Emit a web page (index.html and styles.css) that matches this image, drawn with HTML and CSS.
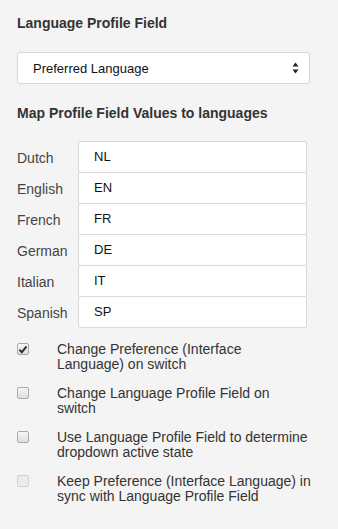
FILE: index.html
```html
<!DOCTYPE html>
<html>
<head>
<meta charset="utf-8">
<link rel="stylesheet" href="styles.css">
</head>
<body>
<div class="panel">
  <h2 class="heading">Language Profile Field</h2>
  <div class="select">
    <span class="select-text">Preferred Language</span>
    <svg class="select-arrows" width="7" height="14" viewBox="0 0 7 14">
      <path d="M0.5 5.5 L3.5 1.5 L6.5 5.5 Z" fill="#222"/>
      <path d="M0.5 8.5 L3.5 12.5 L6.5 8.5 Z" fill="#222"/>
    </svg>
  </div>
  <h2 class="heading heading-map">Map Profile Field Values to languages</h2>
  <div class="map">
    <div class="map-row"><span class="map-label">Dutch</span><div class="map-input">NL</div></div>
    <div class="map-row"><span class="map-label">English</span><div class="map-input">EN</div></div>
    <div class="map-row"><span class="map-label">French</span><div class="map-input">FR</div></div>
    <div class="map-row"><span class="map-label">German</span><div class="map-input">DE</div></div>
    <div class="map-row"><span class="map-label">Italian</span><div class="map-input">IT</div></div>
    <div class="map-row"><span class="map-label">Spanish</span><div class="map-input">SP</div></div>
  </div>
  <div class="options">
    <div class="option">
      <span class="check checked">
        <svg width="10" height="9" viewBox="0 0 10 9"><path d="M1.5 4.8 L3.8 7.2 L8.5 1.5" fill="none" stroke="#333" stroke-width="2"/></svg>
      </span>
      <span class="option-text">Change Preference (Interface Language) on switch</span>
    </div>
    <div class="option">
      <span class="check"></span>
      <span class="option-text">Change Language Profile Field on switch</span>
    </div>
    <div class="option">
      <span class="check"></span>
      <span class="option-text">Use Language Profile Field to determine dropdown active state</span>
    </div>
    <div class="option">
      <span class="check disabled"></span>
      <span class="option-text">Keep Preference (Interface Language) in sync with Language Profile Field</span>
    </div>
  </div>
</div>
</body>
</html>
```

FILE: styles.css
```css
html, body {
  margin: 0;
  padding: 0;
  background: #f4f4f4;
}
body {
  font-family: "Liberation Sans", Arial, sans-serif;
  color: #333;
}
.panel {
  padding: 13px 14px 20px 17px;
}
.heading {
  margin: 0;
  font-size: 14px;
  line-height: 20px;
  font-weight: bold;
  color: #333;
}
.heading-map {
  margin-top: 19px;
}
.select {
  margin-top: 19px;
  margin-right: 14px;
  height: 32px;
  box-sizing: border-box;
  background: #fff;
  border: 1px solid #d6d6d6;
  border-radius: 3px;
  display: flex;
  align-items: center;
  justify-content: space-between;
  padding: 0 10px 0 15px;
}
.select-text {
  font-size: 13px;
  color: #111;
  padding-top: 1px;
}
.select-arrows {
  display: block;
}
.map {
  margin-top: 18px;
  margin-right: 17px;
  display: flex;
  flex-direction: column;
}
.map-row {
  display: flex;
  align-items: center;
  margin-top: -1px;
}
.map-row:first-child {
  margin-top: 0;
}
.map-label {
  width: 61px;
  font-size: 14px;
  color: #444;
  padding-top: 1px;
}
.map-input {
  flex: 1;
  height: 32px;
  box-sizing: border-box;
  background: #fff;
  border: 1px solid #d9d9d9;
  border-radius: 2px;
  font-size: 13px;
  color: #111;
  line-height: 30px;
  padding: 0 15px;
}
.options {
  margin-top: 14px;
  display: flex;
  flex-direction: column;
  gap: 14px;
}
.option {
  display: flex;
  align-items: flex-start;
}
.check {
  flex: none;
  width: 12px;
  height: 12px;
  box-sizing: border-box;
  margin-top: 1px;
  border: 1px solid #a9a9a9;
  border-radius: 2px;
  background: linear-gradient(#f6f6f6, #dedede);
  display: flex;
  align-items: center;
  justify-content: center;
}
.check.disabled {
  border-color: #d2d2d2;
  background: #ececec;
}
.option-text {
  margin-left: 28px;
  width: 254px;
  font-size: 14px;
  line-height: 15px;
  color: #333;
}
```
